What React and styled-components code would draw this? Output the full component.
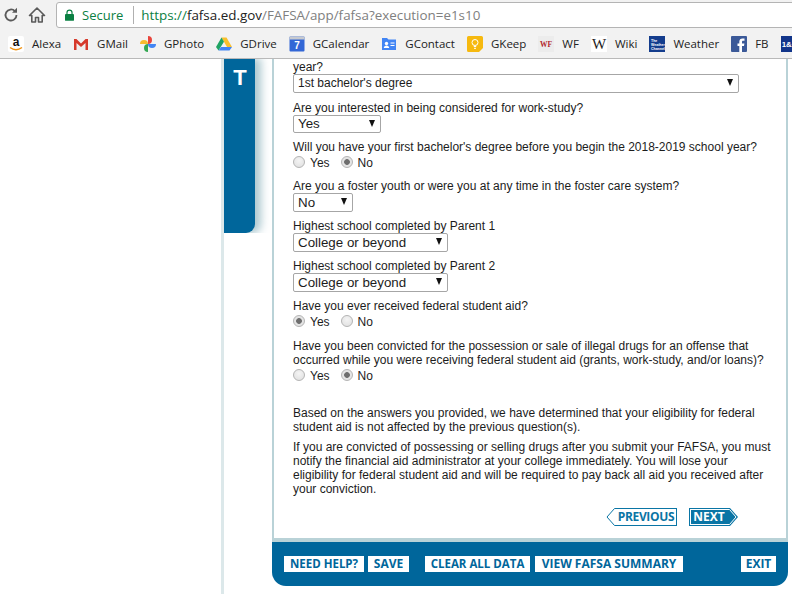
import React from "react";
import styled, { createGlobalStyle } from "styled-components";

const GlobalStyle = createGlobalStyle`
  html, body { margin: 0; padding: 0; height: 100%; background: #fff; overflow: hidden; }
  body { font-family: "Liberation Sans", Arial, sans-serif; }
`;

const BLUE = "#00669b";
const NAV = "#0a75a5";
const EDGE = "#b9d2d7";

const Window = styled.div`
  width: 792px;
  height: 594px;
  display: flex;
  flex-direction: column;
  overflow: hidden;
`;

/* browser chrome */
const Toolbar = styled.div`
  height: 29px;
  flex: none;
  display: flex;
  align-items: center;
  padding: 1px 0 0 2px;
  box-sizing: border-box;
  background: #f2f2f2;
`;
const ToolIcon = styled.svg`
  width: 18px;
  height: 18px;
  margin-right: 8px;
  flex: none;
`;
const UrlBox = styled.div`
  flex: 1;
  height: 26px;
  margin-left: 2px;
  margin-right: -4px;
  box-sizing: border-box;
  display: flex;
  align-items: center;
  padding-left: 8px;
  background: #fff;
  border: 1px solid #b4b4b4;
  border-radius: 3px;
  font-family: "Open Sans", sans-serif;
  font-size: 13.4px;
  white-space: nowrap;
`;
const Secure = styled.span`
  color: #0b8043;
  font-size: 13px;
  margin-left: 8px;
  padding-right: 10px;
  margin-right: 7px;
  border-right: 1px solid #b0b0b0;
  line-height: 18px;
`;
const UrlPart = styled.span`
  color: ${({ $tone }) => ($tone === "host" ? "#222" : $tone === "scheme" ? "#0b8043" : "#808080")};
`;
const Bookmarks = styled.div`
  height: 30px;
  flex: none;
  box-sizing: border-box;
  display: flex;
  align-items: center;
  gap: 12px;
  padding-left: 8px;
  background: #f2f2f2;
  border-bottom: 1px solid #b9b9b9;
  overflow: hidden;
`;
const Mark = styled.div`
  display: flex;
  align-items: center;
  gap: 8px;
  flex: none;
  font-family: "Open Sans", sans-serif;
  font-size: 11.5px;
  color: #222;
`;
const MarkIcon = styled.svg`
  width: 16px;
  height: 16px;
  flex: none;
`;

/* page */
const Page = styled.div`
  flex: 1;
  min-height: 0;
  display: flex;
  padding-left: 221px;
  background: #fff;
`;
const SideColumn = styled.div`
  width: 51px;
  flex: none;
  box-sizing: border-box;
  border-left: 3px solid #dce8ea;
`;
const TabClip = styled.div`
  height: 174px;
  overflow: hidden;
`;
const SideTab = styled.div`
  width: 31px;
  height: 174px;
  box-sizing: border-box;
  padding: 5px 0 0 1px;
  background: ${BLUE};
  border-bottom-right-radius: 9px;
  box-shadow: 5px 0 8px 1px rgba(90, 145, 160, 0.5);
  color: #fff;
  font-size: 22px;
  line-height: 28px;
  font-weight: 700;
  text-align: center;
`;
const Panel = styled.div`
  width: 516px;
  height: 527px;
  flex: none;
  display: flex;
  flex-direction: column;
`;
const Body = styled.div`
  flex: 1;
  min-height: 0;
  box-sizing: border-box;
  padding: 1px 10px 0 19px;
  border-left: 2px solid ${EDGE};
  border-right: 2px solid ${EDGE};
  border-bottom: 4px solid ${EDGE};
  color: #1c1c1c;
  font-size: 12px;
  line-height: 14px;
`;
const Question = styled.div`
  margin-bottom: ${({ $gap }) => $gap ?? 7.5}px;
`;
const SelectWrap = styled.div`
  position: relative;
  width: ${({ $width }) => $width}px;
  height: 18.5px;
  &::after {
    content: "";
    position: absolute;
    right: 6.5px;
    top: 5px;
    border-left: 3.5px solid transparent;
    border-right: 3.5px solid transparent;
    border-top: 7px solid #111;
    pointer-events: none;
  }
`;
const Select = styled.select`
  appearance: none;
  display: block;
  width: 100%;
  height: 100%;
  box-sizing: border-box;
  padding: 0 0 0 4px;
  background: #fff;
  border: 1px solid #a6a6a6;
  border-radius: 2px;
  color: #1c1c1c;
  font-family: "Liberation Sans", Arial, sans-serif;
  font-size: ${({ $small }) => ($small ? 12 : 13.33)}px;
`;
const RadioRow = styled.div`
  display: flex;
  height: 16px;
  gap: 11px;
`;
const RadioLabel = styled.label`
  display: flex;
  align-items: flex-start;
  gap: 5px;
  line-height: 18px;
`;
const Radio = styled.input.attrs({ type: "radio" })`
  appearance: none;
  margin: 2px 0 0;
  width: 12px;
  height: 12px;
  border-radius: 50%;
  border: 1px solid #b4b4b4;
  background: radial-gradient(circle at 50% 35%, #f4f4f4, #dedede);
  &:checked {
    background: radial-gradient(circle, #6e6e6e 0, #6e6e6e 2.5px, #e4e4e4 3.2px);
  }
`;
const Paragraph = styled.p`
  margin: 0 0 ${({ $gap }) => $gap ?? 0}px;
`;
const NavRow = styled.div`
  display: flex;
  justify-content: flex-end;
  gap: 12px;
  margin-top: 12px;
  padding-right: 38px;
`;
const NavButton = styled.div`
  display: flex;
  height: 18px;
  flex-direction: ${({ $next }) => ($next ? "row" : "row-reverse")};
`;
const NavLabel = styled.div`
  width: ${({ $width }) => $width}px;
  box-sizing: border-box;
  font-family: "Open Sans", sans-serif;
  font-weight: 700;
  font-size: 12px;
  line-height: 16px;
  text-align: center;
  letter-spacing: ${({ $next }) => ($next ? 0 : -0.35)}px;
  color: ${({ $next }) => ($next ? "#fff" : NAV)};
  background: ${({ $next }) => ($next ? NAV : "#fff")};
  border: 1px solid ${NAV};
  border-width: ${({ $next }) => ($next ? "1px 0 1px 1px" : "1px 1px 1px 0")};
  box-shadow: ${({ $next }) => ($next ? "inset 1px 1px #fff, inset 0 -1px #fff" : "none")};
`;
const NavHead = styled.svg`
  width: 10px;
  height: 18px;
  flex: none;
`;
const Footer = styled.div`
  height: 44px;
  flex: none;
  display: flex;
  align-items: center;
  padding: 0 12px;
  box-sizing: border-box;
  background: ${BLUE};
  border-radius: 0 0 14px 14px;
`;
const FooterButton = styled.div`
  width: ${({ $width }) => $width}px;
  height: 16px;
  flex: none;
  margin-left: ${({ $left }) => $left ?? 4}px;
  background: #fff;
  color: ${BLUE};
  font-family: "Open Sans", sans-serif;
  font-weight: 700;
  font-size: ${({ $size }) => $size ?? 12}px;
  line-height: 16px;
  text-align: center;
  white-space: nowrap;
`;

const Radios = ({ name, value }) => (
  <RadioRow>
    <RadioLabel>
      <Radio name={name} readOnly checked={value === "yes"} />
      Yes
    </RadioLabel>
    <RadioLabel>
      <Radio name={name} readOnly checked={value === "no"} />
      No
    </RadioLabel>
  </RadioRow>
);

const Dropdown = ({ width, value, small }) => (
  <SelectWrap $width={width}>
    <Select $small={small} defaultValue={value}>
      <option>{value}</option>
    </Select>
  </SelectWrap>
);

const marks = [
  ["Alexa", (
    <>
      <rect width="16" height="16" rx="2" fill="#fff" />
      <text x="8" y="10" textAnchor="middle" fontSize="12" fontWeight="700" fontFamily="Liberation Sans" fill="#111">a</text>
      <path d="M2 11.5c4 3 8 3 12 0" stroke="#f0900f" strokeWidth="1.5" fill="none" />
    </>
  )],
  ["GMail", (
    <>
      <path d="M3.500 7v7h9V7L8 11z" fill="#efefef" />
      <path d="M1 3h2.500L8 7.500 12.500 3H15v11h-2.500V7L8 11 3.500 7v7H1z" fill="#d6392b" />
    </>
  )],
  ["GPhoto", (
    <>
      <path d="M8 8V0a4 4 0 0 1 0 8z" fill="#e8453c" />
      <path d="M8 8h8a4 4 0 0 1-8 0z" fill="#4285f4" />
      <path d="M8 8v8a4 4 0 0 1 0-8z" fill="#34a853" />
      <path d="M8 8H0a4 4 0 0 1 8 0z" fill="#f9bb2d" />
    </>
  )],
  ["GDrive", (
    <>
      <path d="M5.500 1.500h5L16 11h-5z" fill="#f9c02d" />
      <path d="M5.500 1.500 0 11l2.500 3.500L8 5.700z" fill="#1fa463" />
      <path d="M5 11h11l-2.500 3.500h-11z" fill="#4285f4" />
    </>
  )],
  ["GCalendar", (
    <>
      <rect x="0.500" y="0.500" width="15" height="15" rx="1" fill="#3367d6" />
      <rect x="0.500" y="0.500" width="15" height="3" fill="#c6c9cf" />
      <text x="8" y="13" textAnchor="middle" fontSize="10" fontWeight="700" fontFamily="Liberation Sans" fill="#fff">7</text>
    </>
  )],
  ["GContact", (
    <>
      <path d="M1 2h5l1.500 1.500H15V14H1z" fill="#4285f4" />
      <circle cx="5.500" cy="7.500" r="1.700" fill="#fff" />
      <path d="M2.800 12c0-3.500 5.400-3.500 5.400 0zM9.500 6.500h4v1h-4zM9.500 9h4v1h-4z" fill="#fff" />
    </>
  )],
  ["GKeep", (
    <>
      <path d="M0 1.500A1.500 1.500 0 0 1 1.500 0h13A1.500 1.500 0 0 1 16 1.500V12l-4 4H1.500A1.500 1.500 0 0 1 0 14.500z" fill="#f6b90f" />
      <circle cx="8" cy="6.500" r="3" fill="none" stroke="#fff" strokeWidth="1" />
      <path d="M6.800 10.500h2.400M7 12.300h2" stroke="#fff" strokeWidth="1" />
    </>
  )],
  ["WF", (
    <>
      <rect width="16" height="16" fill="#ececec" />
      <text x="8" y="11" textAnchor="middle" fontSize="7.500" fontWeight="700" fontFamily="Liberation Serif" fill="#b3282d">WF</text>
    </>
  )],
  ["Wiki", (
    <>
      <rect width="16" height="16" fill="#fff" />
      <text x="8" y="13" textAnchor="middle" fontSize="15" fontFamily="Liberation Serif" fill="#222">W</text>
    </>
  )],
  ["Weather", (
    <>
      <rect width="16" height="16" fill="#143d8d" />
      <text x="2" y="6" fontSize="3.500" fontWeight="700" fontFamily="Liberation Sans" fill="#fff">The</text>
      <text x="2" y="10" fontSize="3.500" fontWeight="700" fontFamily="Liberation Sans" fill="#fff">Weather</text>
      <text x="2" y="14" fontSize="3.500" fontWeight="700" fontFamily="Liberation Sans" fill="#fff">Channel</text>
    </>
  )],
  ["FB", (
    <>
      <rect width="16" height="16" rx="1" fill="#3b5998" />
      <path d="M11 16V10h2l.4-2.500H11V6c0-.8.3-1.200 1.200-1.200h1.300V2.500h-2C9.500 2.500 8.300 3.700 8.300 5.800v1.700H6.500V10h1.800v6z" fill="#fff" />
    </>
  )],
  ["", (
    <>
      <rect width="16" height="16" fill="#12358a" />
      <text x="8" y="11" textAnchor="middle" fontSize="8" fontWeight="700" fontFamily="Liberation Sans" fill="#fff">1&amp;1</text>
    </>
  )],
];

const App = () => (
  <Window>
    <GlobalStyle />
    <Toolbar>
      <ToolIcon viewBox="0 0 18 18">
        <path d="M14.500 9a5.500 5.500 0 1 1-1.600-3.900" fill="none" stroke="#5a5a5a" strokeWidth="1.800" />
        <path d="M15 1.800v5h-5z" fill="#5a5a5a" />
      </ToolIcon>
      <ToolIcon viewBox="0 0 18 18">
        <path d="M9 2 1.500 9.500h2.300V16h3.700v-4.500h3V16h3.700V9.500h2.300z" fill="none" stroke="#5a5a5a" strokeWidth="1.600" strokeLinejoin="round" />
      </ToolIcon>
      <UrlBox>
        <svg width="9" height="12" viewBox="0 0 10 13">
          <path d="M2.200 6V3.800a2.800 2.800 0 0 1 5.600 0V6" fill="none" stroke="#0b8043" strokeWidth="1.300" />
          <rect y="5.500" width="10" height="7.500" rx="1" fill="#0b8043" />
        </svg>
        <Secure>Secure</Secure>
        <UrlPart $tone="scheme">https://</UrlPart>
        <UrlPart $tone="host">fafsa.ed.gov</UrlPart>
        <UrlPart>/FAFSA/app/fafsa?execution=e1s10</UrlPart>
      </UrlBox>
    </Toolbar>
    <Bookmarks>
      {marks.map(([name, icon], i) => (
        <Mark key={i}>
          <MarkIcon viewBox="0 0 16 16">{icon}</MarkIcon>
          {name}
        </Mark>
      ))}
    </Bookmarks>
    <Page>
      <SideColumn>
        <TabClip>
          <SideTab>T</SideTab>
        </TabClip>
      </SideColumn>
      <Panel>
        <Body>
          <Question $gap={8}>
            <div>year?</div>
            <Dropdown width={446} value="1st bachelor's degree" small />
          </Question>
          <Question $gap={7}>
            <div>Are you interested in being considered for work-study?</div>
            <Dropdown width={88} value="Yes" />
          </Question>
          <Question $gap={9}>
            <div>Will you have your first bachelor's degree before you begin the 2018-2019 school year?</div>
            <Radios name="degree" value="no" />
          </Question>
          <Question>
            <div>Are you a foster youth or were you at any time in the foster care system?</div>
            <Dropdown width={60} value="No" />
          </Question>
          <Question>
            <div>Highest school completed by Parent 1</div>
            <Dropdown width={155} value="College or beyond" />
          </Question>
          <Question>
            <div>Highest school completed by Parent 2</div>
            <Dropdown width={155} value="College or beyond" />
          </Question>
          <Question $gap={10}>
            <div>Have you ever received federal student aid?</div>
            <Radios name="aid" value="yes" />
          </Question>
          <Question $gap={23}>
            <div>
              Have you been convicted for the possession or sale of illegal drugs for an offense that
              <br />
              occurred while you were receiving federal student aid (grants, work-study, and/or loans)?
            </div>
            <Radios name="drugs" value="no" />
          </Question>
          <Paragraph $gap={6}>
            Based on the answers you provided, we have determined that your eligibility for federal
            <br />
            student aid is not affected by the previous question(s).
          </Paragraph>
          <Paragraph>
            If you are convicted of possessing or selling drugs after you submit your FAFSA, you must
            <br />
            notify the financial aid administrator at your college immediately. You will lose your
            <br />
            eligibility for federal student aid and will be required to pay back all aid you received after
            <br />
            your conviction.
          </Paragraph>
          <NavRow>
            <NavButton>
              <NavLabel $width={61}>PREVIOUS</NavLabel>
              <NavHead viewBox="0 0 10 18">
                <path d="M10 .5H8.500L1 9l7.500 8.500H10" fill="#fff" stroke={NAV} strokeWidth="1" />
              </NavHead>
            </NavButton>
            <NavButton $next>
              <NavLabel $next $width={39}>NEXT</NavLabel>
              <NavHead viewBox="0 0 10 18">
                <path d="M0 0h2l8 9-8 9H0z" fill={NAV} />
                <path d="M0 1.500h1.500L8 9l-6.500 7.500H0" fill="none" stroke="#fff" strokeWidth="1" />
              </NavHead>
            </NavButton>
          </NavRow>
        </Body>
        <Footer>
          <FooterButton $left={0} $width={80} $size={11.5}>NEED HELP?</FooterButton>
          <FooterButton $width={41}>SAVE</FooterButton>
          <FooterButton $left={16} $width={105} $size={11.5}>CLEAR ALL DATA</FooterButton>
          <FooterButton $left={5} $width={148}>VIEW FAFSA SUMMARY</FooterButton>
          <FooterButton $left={58} $width={35}>EXIT</FooterButton>
        </Footer>
      </Panel>
    </Page>
  </Window>
);

export default App;
